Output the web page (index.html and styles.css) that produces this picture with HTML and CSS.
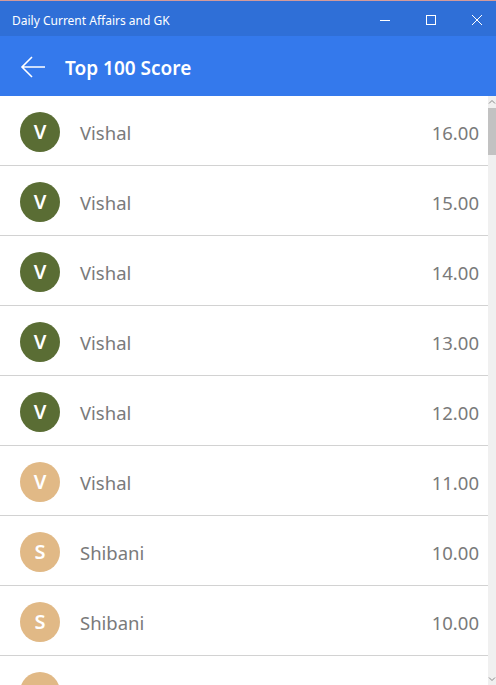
FILE: index.html
```html
<!DOCTYPE html>
<html lang="en">
<head>
  <meta charset="UTF-8" />
  <title>Daily Current Affairs and GK</title>
  <meta name="viewport" content="width=device-width, initial-scale=1.0" />
  <link rel="stylesheet" href="styles.css">
</head>
<body>
  <div class="window">
    <div class="titlebar">
      <span class="app-name">Daily Current Affairs and GK</span>
      <div class="controls">
        <span class="ctrl">
          <svg width="10" height="10" viewBox="0 0 10 10"><path d="M0 5.5h10" stroke="#fff" stroke-width="1"/></svg>
        </span>
        <span class="ctrl">
          <svg width="10" height="10" viewBox="0 0 10 10"><rect x="0.5" y="0.5" width="9" height="9" fill="none" stroke="#fff" stroke-width="1"/></svg>
        </span>
        <span class="ctrl">
          <svg width="10" height="10" viewBox="0 0 10 10"><path d="M0 0L10 10M10 0L0 10" stroke="#fff" stroke-width="1"/></svg>
        </span>
      </div>
    </div>

    <header class="appbar">
      <svg class="back" width="26" height="22" viewBox="0 0 26 22">
        <path d="M25 11H2M12 1L2 11l10 10" fill="none" stroke="#fff" stroke-width="1.6"/>
      </svg>
      <h1>Top 100 Score</h1>
    </header>

    <div class="content">
      <ul class="scores">
        <li class="row"><span class="avatar green">V</span><span class="name">Vishal</span><span class="score">16.00</span></li>
        <li class="row"><span class="avatar green">V</span><span class="name">Vishal</span><span class="score">15.00</span></li>
        <li class="row"><span class="avatar green">V</span><span class="name">Vishal</span><span class="score">14.00</span></li>
        <li class="row"><span class="avatar green">V</span><span class="name">Vishal</span><span class="score">13.00</span></li>
        <li class="row"><span class="avatar green">V</span><span class="name">Vishal</span><span class="score">12.00</span></li>
        <li class="row"><span class="avatar tan">V</span><span class="name">Vishal</span><span class="score">11.00</span></li>
        <li class="row"><span class="avatar tan">S</span><span class="name">Shibani</span><span class="score">10.00</span></li>
        <li class="row"><span class="avatar tan">S</span><span class="name">Shibani</span><span class="score">10.00</span></li>
        <li class="row"><span class="avatar tan">S</span><span class="name">Shibani</span><span class="score">10.00</span></li>
      </ul>

      <div class="scrollbar">
        <svg class="arrow" width="8" height="6" viewBox="0 0 8 6"><path d="M1 4.5L4 1.5l3 3" fill="none" stroke="#888" stroke-width="1"/></svg>
        <div class="thumb"></div>
        <div class="track"></div>
        <svg class="arrow" width="8" height="6" viewBox="0 0 8 6"><path d="M1 1.5L4 4.5l3-3" fill="none" stroke="#888" stroke-width="1"/></svg>
      </div>
    </div>
  </div>
</body>
</html>
```

FILE: styles.css
```css
* {
  box-sizing: border-box;
  margin: 0;
  padding: 0;
}

body {
  font-family: 'Noto Sans', 'Open Sans', sans-serif;
  background: #fff;
  width: 496px;
  height: 685px;
  overflow: hidden;
}

.window {
  display: flex;
  flex-direction: column;
  height: 685px;
  border-top: 1px solid #d49a9a;
}

.titlebar {
  height: 35px;
  background-color: #2f6fd7;
  color: #fff;
  display: flex;
  align-items: center;
  justify-content: space-between;
  padding-left: 12px;
}

.app-name {
  font-size: 12px;
  padding-top: 3px;
}

.controls {
  display: flex;
  margin-right: -4px;
}

.ctrl {
  width: 46px;
  height: 35px;
  display: flex;
  align-items: center;
  justify-content: center;
  padding-top: 2px;
}

.appbar {
  height: 60px;
  background-color: #3479ec;
  display: flex;
  align-items: center;
  padding-left: 20px;
}

.back {
  margin-right: 19px;
  margin-top: 2px;
}

.appbar h1 {
  color: #fff;
  font-size: 19px;
  font-weight: 600;
  margin-top: 3px;
}

.content {
  flex: 1;
  display: flex;
  overflow: hidden;
}

.scores {
  flex: 1;
  list-style: none;
}

.row {
  height: 70px;
  display: flex;
  align-items: center;
  padding: 2px 9px 0 20px;
  border-bottom: 1px solid #d2d2d2;
}

.avatar {
  width: 40px;
  height: 40px;
  border-radius: 50%;
  color: #fff;
  font-size: 20px;
  font-weight: 600;
  display: flex;
  align-items: center;
  justify-content: center;
  margin-right: 20px;
  padding-bottom: 1px;
}

.avatar.green {
  background-color: #5a6d34;
}

.avatar.tan {
  background-color: #e1b986;
}

.name {
  flex: 1;
  font-size: 18.5px;
  color: #7a7a7a;
  padding-top: 2px;
}

.score {
  font-size: 18.5px;
  color: #7a7a7a;
  padding-top: 2px;
}

.scrollbar {
  width: 8px;
  background-color: #f0f0f0;
  display: flex;
  flex-direction: column;
  align-items: center;
  padding: 3px 0;
}

.arrow {
  flex-shrink: 0;
}

.thumb {
  width: 8px;
  height: 47px;
  background-color: #c2c2c2;
  margin-top: 3px;
}

.track {
  flex: 1;
}
```
